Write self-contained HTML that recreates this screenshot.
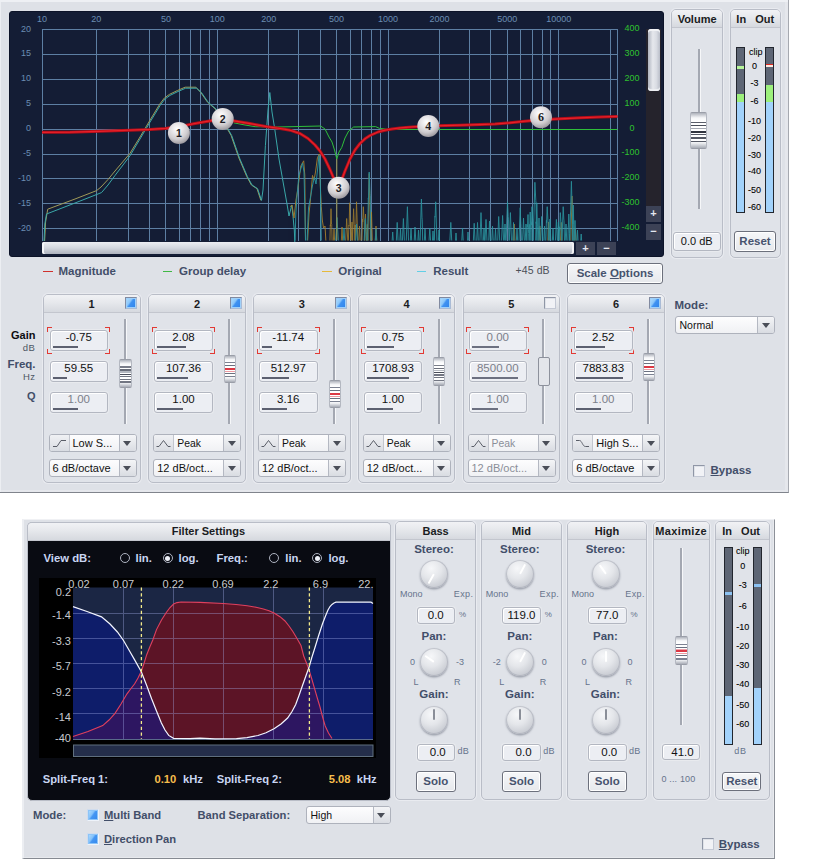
<!DOCTYPE html><html><head><meta charset="utf-8"><title>EQ</title><style>
*{box-sizing:border-box}
html,body{margin:0;padding:0;background:#fff}
body{width:818px;height:864px;overflow:hidden;position:relative;font-family:"Liberation Sans",Arial,sans-serif;font-size:11px;color:#000}
.abs{position:absolute}
.main{position:absolute;background:#dee1e7;}
.grp{position:absolute;border:1px solid #b9bdc7;border-radius:5px;background:#e0e3e9;box-shadow:0 0 0 1px #e9ebf0}
.grp .hd{position:absolute;left:0;right:0;top:0;border-radius:4px 4px 0 0;background:linear-gradient(#f1f2f5,#e6e8ec 45%,#d6d9df);border-bottom:1px solid #c3c6ce;text-align:center;font-weight:bold;font-size:11px;color:#1a1c22}
.t{position:absolute;white-space:nowrap;line-height:1}
.b{font-weight:bold}
.lbl{color:#424e69;font-weight:bold}
.inp{position:absolute;background:#eceef3;border:1px solid #b3b7c1;border-radius:3px;box-shadow:inset 1px 1px 0 #fff, 0 0 0 1px #e8eaee;text-align:center;font-size:11px;color:#111}
.inp.dis{color:#7c808a}
.bar{position:absolute;height:2px;background:#5c6070}
.btn{position:absolute;border:1px solid #6c707c;border-radius:3px;background:linear-gradient(#f6f7f9,#e6e8ec);box-shadow:inset 0 0 0 1px #fff;text-align:center;font-weight:bold;color:#47536e;font-size:11.5px}
.combo{position:absolute;border:1px solid #aeb2bc;border-radius:3px;background:linear-gradient(#fdfdfe,#f0f1f4);font-size:11px;color:#111;overflow:hidden}
.combo .ar{position:absolute;right:0;top:0;bottom:0;width:17px;border-left:1px solid #b4b8c2;background:linear-gradient(#f4f5f7,#d9dce2)}
.combo .ar:after{content:"";position:absolute;left:3.5px;top:6px;border:4.5px solid transparent;border-top:5px solid #4a4e58;border-bottom:0}
.combo .ic{position:absolute;left:0;top:0;bottom:0;width:20px;border-right:1px solid #c3c6ce;background:linear-gradient(#f0f1f4,#d9dce2)}
.combo.dis{color:#8a8e98}
.chk{position:absolute;width:12px;height:12px;border:1px solid;border-color:#8f96a6 #c3c8d4 #c3c8d4 #8f96a6;background:#f1f2f6;box-shadow:inset 1px 1px 0 #dfe2e8}
.chk.on{border-color:#818aa0 #a9bbd6 #a9bbd6 #818aa0;background:linear-gradient(125deg,#b4defd 0%,#8ac6fa 38%,#3f92f2 50%,#2f82ea 100%);box-shadow:inset 0 0 0 1px #9fd0f9}
.chk.lt{border-color:#cfdcee #eef3fa #eef3fa #cfdcee;background:linear-gradient(125deg,#b4defd 0%,#84c2fa 40%,#4496f3 52%,#3487ec 100%);box-shadow:inset 0 0 0 1px #8cc4f8}
.trk{position:absolute;width:2px;background:#a4a8b2;box-shadow:1px 0 0 #f6f7f9}
.thumb{position:absolute;border-radius:2px;border:1px solid #b4b8c1;border-top-color:#9a9ea8;border-bottom-color:#9a9ea8;background:linear-gradient(#aeb2bb,#f6f7f9 14%,#ffffff 24%,#ffffff 78%,#eceef1 86%,#a8acb6);overflow:hidden}
.thumb i{position:absolute;left:0;right:0;height:1px;background:#6a6e7a}
.thumb i.r{background:#e0303a;height:2px}
.knob{position:absolute;width:28px;height:28px;border-radius:50%;background:radial-gradient(circle at 40% 30%,#f6f7f9 0%,#e4e6ea 40%,#c9ccd3 75%,#b4b7c0 100%);box-shadow:0 1.5px 2px rgba(110,115,130,.6),inset 0 0 0 1px rgba(150,155,168,.45)}
.knob i{position:absolute;left:13px;top:3px;width:2px;height:11px;background:#fff;transform-origin:1px 11px;border-radius:1px}
.knob i.d{background:#8a8e98}
.sm{font-size:9px;color:#66738c}
</style></head><body>
<div class="main" style="left:0;top:0;width:789px;height:493px;border-bottom:1px solid #80848c;border-right:1px solid #a6a9b0;box-shadow:inset 1px 0 0 #eceef2,inset -3px 0 0 #e5e7ec,inset 0 -2px 0 #e5e7ec"></div>
<div class="abs" style="left:0;top:0;width:788px;height:2px;background:#eef0f4"></div>
<div class="abs" style="left:9px;top:10.5px;width:654.8px;height:246.5px;background:#141d35;border-radius:3px;border:1px solid #0c1328"></div>
<svg class="abs" style="left:0;top:0" width="670" height="260" viewBox="0 0 670 260" font-family="Liberation Sans, Arial, sans-serif"><path d="M42.5 29V240.5M96.5 29V240.5M128.5 29V240.5M149.5 29V240.5M165.5 29V240.5M179.5 29V240.5M190.5 29V240.5M200.5 29V240.5M209.5 29V240.5M217.5 29V240.5M268.5 29V240.5M298.5 29V240.5M320.5 29V240.5M336.5 29V240.5M350.5 29V240.5M361.5 29V240.5M371.5 29V240.5M380.5 29V240.5M388.5 29V240.5M439.5 29V240.5M469.5 29V240.5M490.5 29V240.5M507.5 29V240.5M520.5 29V240.5M532.5 29V240.5M542.5 29V240.5M550.5 29V240.5M558.5 29V240.5M610.5 29V240.5M617.5 29V240.5M42 29.5H618.0M42 54.5H618.0M42 79.5H618.0M42 104.5H618.0M42 129.5H618.0M42 154.5H618.0M42 178.5H618.0M42 203.5H618.0M42 228.5H618.0" stroke="#5d7fa3" stroke-width="1" fill="none" shape-rendering="crispEdges"/><text x="42.0" y="21.9" font-size="9" fill="#6b8db3" text-anchor="middle">10</text><text x="96.3" y="21.9" font-size="9" fill="#6b8db3" text-anchor="middle">20</text><text x="165.9" y="21.9" font-size="9" fill="#6b8db3" text-anchor="middle">50</text><text x="217.3" y="21.9" font-size="9" fill="#6b8db3" text-anchor="middle">100</text><text x="268.7" y="21.9" font-size="9" fill="#6b8db3" text-anchor="middle">200</text><text x="336.6" y="21.9" font-size="9" fill="#6b8db3" text-anchor="middle">500</text><text x="388.0" y="21.9" font-size="9" fill="#6b8db3" text-anchor="middle">1000</text><text x="439.4" y="21.9" font-size="9" fill="#6b8db3" text-anchor="middle">2000</text><text x="507.3" y="21.9" font-size="9" fill="#6b8db3" text-anchor="middle">5000</text><text x="558.7" y="21.9" font-size="9" fill="#6b8db3" text-anchor="middle">10000</text><text x="31" y="31.5" font-size="9" fill="#6b8db3" text-anchor="end">20</text><text x="31" y="56.4" font-size="9" fill="#6b8db3" text-anchor="end">15</text><text x="31" y="81.3" font-size="9" fill="#6b8db3" text-anchor="end">10</text><text x="31" y="106.2" font-size="9" fill="#6b8db3" text-anchor="end">5</text><text x="31" y="131.1" font-size="9" fill="#6b8db3" text-anchor="end">0</text><text x="31" y="156.0" font-size="9" fill="#6b8db3" text-anchor="end">-5</text><text x="31" y="180.9" font-size="9" fill="#6b8db3" text-anchor="end">-10</text><text x="31" y="205.8" font-size="9" fill="#6b8db3" text-anchor="end">-15</text><text x="31" y="230.7" font-size="9" fill="#6b8db3" text-anchor="end">-20</text><text x="639.5" y="30.9" font-size="9" fill="#2fc22f" text-anchor="end">400</text><text x="639.5" y="55.8" font-size="9" fill="#2fc22f" text-anchor="end">300</text><text x="639.5" y="80.7" font-size="9" fill="#2fc22f" text-anchor="end">200</text><text x="639.5" y="105.6" font-size="9" fill="#2fc22f" text-anchor="end">100</text><text x="634.5" y="130.5" font-size="9" fill="#2fc22f" text-anchor="end">0</text><text x="639.5" y="155.4" font-size="9" fill="#2fc22f" text-anchor="end">-100</text><text x="639.5" y="180.3" font-size="9" fill="#2fc22f" text-anchor="end">-200</text><text x="639.5" y="205.2" font-size="9" fill="#2fc22f" text-anchor="end">-300</text><text x="639.5" y="230.1" font-size="9" fill="#2fc22f" text-anchor="end">-400</text><polyline points="44.6,241.0 45.6,222.0 47.7,209.2 75.0,199.0 96.6,190.6 101.0,187.0 108.0,179.5 115.0,171.0 130.0,153.3 139.4,138.0 149.0,121.8 159.7,104.2 164.4,98.0 169.4,94.4 177.4,90.5 185.1,87.2 195.9,87.2 200.8,92.5 207.6,102.3 215.4,109.0 223.4,122.0 231.1,135.5 238.9,158.0 246.8,176.6 251.4,185.0 257.0,188.7 260.9,200.4" fill="none" stroke="#a09a58" stroke-width="1"/><polyline points="44.0,241.0 44.8,224.0 46.5,214.0 75.0,203.0 101.5,192.6 108.0,185.0 115.0,175.5 130.0,155.8 140.0,139.0 149.6,122.8 160.3,105.2 165.0,99.0 170.0,95.4 178.0,91.5 185.7,88.2 196.5,88.2 201.4,92.5 208.2,102.3 216.0,109.0 224.0,122.0 231.7,135.5 239.5,158.0 247.4,176.6 252.0,185.0 257.6,188.7 261.5,200.4 263.0,190.0 265.4,145.6 268.0,110.0 269.8,92.5 272.0,112.0 274.7,128.7 279.0,159.0 284.5,190.0 287.0,204.0 289.0,216.0 291.8,205.0 293.0,216.5 294.3,230.0 295.0,246.0" fill="none" stroke="#3aa7a8" stroke-width="1"/><clipPath id="cl"><rect x="42" y="29" width="576" height="211.5"/></clipPath><g clip-path="url(#cl)" fill="none" stroke-width="1" opacity="0.9"><polyline points="290.0,206.7 292.0,205.0 294.0,218.0 296.0,200.0 297.8,189.0 299.5,176.0 300.8,166.0 303.7,160.8 304.8,175.0 305.5,243.0 307.5,243.0 309.0,214.0 310.5,199.0 312.5,175.4 314.0,180.0 315.5,172.0 317.4,157.8 319.3,154.0 320.3,185.0 321.3,206.7 322.3,220.0 323.5,228.0 325.0,226.0 326.0,243.0" stroke="#a8832e"/><polyline points="295.0,243.0 295.8,215.0 296.8,199.0 298.8,176.0 300.5,170.0 302.5,163.0 304.0,172.0 305.6,243.0 307.0,243.0 308.5,208.0 310.5,197.0 312.4,186.0 314.4,177.4 316.0,184.0 317.5,170.0 319.0,155.5 320.3,180.0 321.3,243.0" stroke="#2c9aa3"/></g><g opacity="0.88"><polyline clip-path="url(#cl)" points="329.8,246.0 330.3,224.8 330.5,226.2 331.0,208.7 331.5,224.0 331.7,224.3 332.2,246.0 333.1,246.0 334.0,229.0 334.9,246.0 341.1,246.0 342.0,227.0 342.9,246.0 345.4,246.0 346.7,218.5 348.0,246.0 348.2,246.0 348.9,225.2 349.1,226.2 349.7,202.8 350.4,225.1 350.6,227.4 351.2,246.0 351.0,246.0 352.0,222.0 353.0,246.0 352.3,246.0 353.6,208.7 354.2,224.1 354.4,224.8 354.9,246.0 355.0,246.0 355.7,225.1 355.9,227.2 356.5,201.8 358.0,246.0 358.5,246.0 359.5,226.0 360.5,246.0 361.8,246.0 362.5,219.0 362.7,222.0 363.3,206.7 364.0,219.7 364.2,219.9 364.8,246.0 364.5,246.0 365.5,214.0 365.9,227.4 366.1,231.8 366.5,246.0 366.3,246.0 367.3,224.3 368.3,246.0 367.7,246.0 369.2,173.5 370.7,246.0 370.5,246.0 370.9,228.5 371.1,230.3 371.5,212.0 372.5,246.0 374.9,246.0 376.0,226.0 377.1,246.0 513.3,246.0 514.3,224.0 515.3,246.0 538.8,246.0 539.8,226.0 540.8,246.0 547.6,246.0 548.6,222.0 549.6,246.0 560.3,246.0 561.3,222.4 562.3,246.0 570.7,246.0 572.0,196.0 572.6,211.0 572.8,212.1 573.3,246.0 574.6,246.0 575.5,228.0 576.4,246.0" fill="none" stroke="#a8832e" stroke-width="0.9" stroke-linejoin="miter"/><polyline clip-path="url(#cl)" points="335.4,246.0 337.0,217.5 338.6,246.0 343.0,246.0 344.0,228.0 345.0,246.0 355.3,246.0 356.5,224.0 357.7,246.0 363.9,246.0 365.3,218.5 366.7,246.0 367.5,246.0 368.3,197.9 368.5,199.5 369.2,172.0 370.0,193.8 370.2,195.8 370.9,246.0 375.0,246.0 376.0,229.0 377.0,246.0 391.8,246.0 392.7,232.0 393.6,246.0 396.1,246.0 397.2,222.4 398.3,246.0 399.6,246.0 400.5,229.0 401.4,246.0 402.2,246.0 403.4,218.5 404.6,246.0 406.1,246.0 407.4,206.7 408.7,246.0 410.0,246.0 411.0,228.0 412.0,246.0 413.9,246.0 415.0,227.0 416.1,246.0 417.6,246.0 418.5,230.0 419.4,246.0 420.0,246.0 421.4,199.0 422.0,217.9 422.2,219.3 422.8,246.0 424.0,246.0 425.0,229.0 426.0,246.0 428.7,246.0 429.8,228.0 430.9,246.0 432.1,246.0 433.0,231.0 433.9,246.0 434.3,246.0 434.9,216.4 435.1,217.2 435.7,201.8 437.1,246.0 438.1,246.0 439.0,230.0 439.9,246.0 449.6,246.0 450.8,222.4 452.0,246.0 455.2,246.0 456.0,233.0 456.8,246.0 461.5,246.0 462.5,228.0 463.5,246.0 467.2,246.0 468.0,232.0 468.8,246.0 473.1,246.0 474.2,223.3 475.3,246.0 476.5,246.0 477.5,222.5 478.5,246.0 479.7,246.0 481.0,212.6 482.3,246.0 483.1,246.0 484.0,228.0 484.9,246.0 484.8,246.0 486.0,219.4 487.2,246.0 488.5,246.0 489.5,221.0 490.5,246.0 491.5,246.0 492.5,226.0 493.5,246.0 494.6,246.0 495.5,229.0 496.4,246.0 497.5,246.0 498.7,216.5 499.9,246.0 501.4,246.0 502.6,215.5 503.8,246.0 504.1,246.0 505.0,224.0 505.9,246.0 505.9,246.0 507.5,201.8 508.2,216.8 508.5,219.9 509.1,246.0 509.1,246.0 510.4,212.6 511.7,246.0 512.5,246.0 513.5,222.5 514.5,246.0 516.1,246.0 517.0,228.0 517.9,246.0 518.8,246.0 520.2,207.7 520.8,223.3 521.0,226.6 521.6,246.0 522.4,246.0 523.5,218.0 524.6,246.0 525.0,246.0 526.0,224.0 527.0,246.0 526.8,246.0 527.3,224.8 527.5,226.7 528.0,214.5 528.5,229.3 528.7,233.6 529.2,246.0 529.2,246.0 529.7,224.3 529.8,228.0 530.2,212.0 530.7,227.8 530.8,232.1 531.2,246.0 530.7,246.0 531.3,222.5 531.5,224.9 532.0,206.7 532.6,218.3 532.8,219.8 533.3,246.0 533.0,246.0 534.9,182.3 535.8,200.4 536.0,203.5 536.8,246.0 535.5,246.0 536.1,221.8 536.3,223.7 536.8,202.8 537.4,225.1 537.6,226.1 538.1,246.0 538.0,246.0 539.0,218.0 540.0,246.0 540.5,246.0 541.7,216.5 542.9,246.0 543.6,246.0 544.5,226.0 545.4,246.0 545.7,246.0 546.4,220.4 546.6,222.9 547.2,206.7 547.9,220.2 548.1,224.0 548.7,246.0 549.0,246.0 550.0,219.0 551.0,246.0 552.1,246.0 553.0,228.0 553.9,246.0 555.2,246.0 556.4,219.4 557.6,246.0 557.5,246.0 558.4,222.0 559.3,246.0 559.0,246.0 559.6,226.8 559.8,230.4 560.3,212.6 560.9,221.3 561.1,222.5 561.6,246.0 561.8,246.0 563.2,206.7 563.8,219.1 564.0,220.7 564.6,246.0 565.0,246.0 566.0,224.0 567.0,246.0 567.8,246.0 568.2,226.7 568.4,226.9 568.8,214.0 569.2,228.8 569.4,233.6 569.8,246.0 569.6,246.0 571.4,181.3 573.2,246.0 572.3,246.0 572.8,220.3 572.9,224.1 573.3,205.0 574.3,246.0 573.9,246.0 575.0,220.4 576.1,246.0 576.7,246.0 577.5,230.0 578.3,246.0 580.4,246.0 581.2,234.0 582.0,246.0" fill="none" stroke="#2c9aa3" stroke-width="0.95" stroke-linejoin="miter"/></g><path d="M336.8 240V159" stroke="#9a8f44" stroke-width="1" fill="none"/><polyline points="233.7,122.8 245.0,125.0 255.2,126.7 277.8,127.0 320.6,126.0 325.0,129.0 329.0,137.0 332.0,142.0 334.5,150.0 336.8,159.0 339.0,152.0 341.7,147.6 345.0,138.0 348.7,131.0 353.6,127.0 375.6,126.6 379.5,128.4 389.0,129.5 617.5,129.5" fill="none" stroke="#2fbf3a" stroke-width="1"/><polyline points="42.0,132.3 70.0,132.2 100.0,131.3 130.0,130.2 150.0,129.4 165.2,128.4 178.9,126.6 195.0,123.5 208.2,121.2 216.0,120.0 222.9,119.5 230.0,120.3 235.6,121.2 250.0,123.6 267.0,126.7 280.0,128.5 290.0,130.2 300.0,133.5 308.0,138.5 315.0,145.0 320.0,151.0 325.0,159.0 330.0,169.5 334.0,179.0 337.0,185.5 338.3,187.5 339.6,185.5 342.0,179.0 345.0,171.0 350.0,159.0 355.0,150.0 360.0,143.5 365.0,138.8 370.0,135.5 378.0,132.0 385.0,130.2 392.0,129.0 400.0,127.9 409.0,127.2 420.0,126.4 428.5,126.0 445.0,125.6 460.0,125.2 480.0,124.6 495.0,124.0 510.0,122.8 525.0,121.2 541.0,119.8 560.0,118.8 580.0,117.8 600.0,117.0 617.5,116.4" fill="none" stroke="#b40e18" stroke-width="3" stroke-linejoin="round" stroke-linecap="butt"/><polyline points="42.0,132.3 70.0,132.2 100.0,131.3 130.0,130.2 150.0,129.4 165.2,128.4 178.9,126.6 195.0,123.5 208.2,121.2 216.0,120.0 222.9,119.5 230.0,120.3 235.6,121.2 250.0,123.6 267.0,126.7 280.0,128.5 290.0,130.2 300.0,133.5 308.0,138.5 315.0,145.0 320.0,151.0 325.0,159.0 330.0,169.5 334.0,179.0 337.0,185.5 338.3,187.5 339.6,185.5 342.0,179.0 345.0,171.0 350.0,159.0 355.0,150.0 360.0,143.5 365.0,138.8 370.0,135.5 378.0,132.0 385.0,130.2 392.0,129.0 400.0,127.9 409.0,127.2 420.0,126.4 428.5,126.0 445.0,125.6 460.0,125.2 480.0,124.6 495.0,124.0 510.0,122.8 525.0,121.2 541.0,119.8 560.0,118.8 580.0,117.8 600.0,117.0 617.5,116.4" fill="none" stroke="#e8202a" stroke-width="1.2" stroke-linejoin="round"/><defs><radialGradient id="bg" cx="0.42" cy="0.32" r="0.75"><stop offset="0" stop-color="#ffffff"/><stop offset="0.28" stop-color="#ebe9eb"/><stop offset="0.62" stop-color="#d0cdd0"/><stop offset="1" stop-color="#908c92"/></radialGradient></defs><circle cx="178.9" cy="133" r="11" fill="url(#bg)"/><text x="178.9" y="137" font-size="10.5" font-weight="bold" fill="#1c1c24" text-anchor="middle">1</text><circle cx="222.7" cy="118.9" r="11" fill="url(#bg)"/><text x="222.7" y="122.9" font-size="10.5" font-weight="bold" fill="#1c1c24" text-anchor="middle">2</text><circle cx="338.6" cy="187.7" r="11" fill="url(#bg)"/><text x="338.6" y="191.7" font-size="10.5" font-weight="bold" fill="#1c1c24" text-anchor="middle">3</text><circle cx="428.3" cy="126" r="11" fill="url(#bg)"/><text x="428.3" y="130" font-family="Liberation Serif, serif" font-size="12" font-weight="bold" fill="#1c1c24" text-anchor="middle">4</text><circle cx="541" cy="117.3" r="11" fill="url(#bg)"/><text x="541" y="121.3" font-family="Liberation Serif, serif" font-size="12" font-weight="bold" fill="#1c1c24" text-anchor="middle">6</text></svg>
<div class="abs" style="left:646px;top:29px;width:15px;height:178px;background:#25232c"></div>
<div class="abs" style="left:648px;top:29px;width:12px;height:62px;border-radius:3px;background:linear-gradient(90deg,#aeb3be,#e6e8ed 40%,#d9dce3 70%,#b9bdc8);box-shadow:inset 0 2px 0 #f2f3f6,inset 0 -2px 0 #eceef2"></div>
<div class="abs" style="left:646px;top:206px;width:15px;height:16px;background:#3c4256;color:#e4e8f0;font-weight:bold;font-size:11px;line-height:15px;text-align:center">+</div>
<div class="abs" style="left:646px;top:224px;width:15px;height:16px;background:#3c4256;color:#e4e8f0;font-weight:bold;font-size:11px;line-height:15px;text-align:center">−</div>
<div class="abs" style="left:576px;top:242px;width:19px;height:13px;background:#3c4256;color:#e4e8f0;font-weight:bold;font-size:11px;line-height:12px;text-align:center">+</div>
<div class="abs" style="left:597px;top:242px;width:19px;height:13px;background:#3c4256;color:#e4e8f0;font-weight:bold;font-size:11px;line-height:12px;text-align:center">−</div>
<div class="abs" style="left:42px;top:242px;width:532px;height:12px;border-radius:2px;background:linear-gradient(#eceef2,#d3d7de 50%,#aeb3be);box-shadow:inset 2px 0 0 #f6f7f9,inset -2px 0 0 #f0f1f4"></div>
<div class="abs" style="left:43px;top:270.5px;width:9.5px;height:1.5px;background:#d0302c"></div>
<div class="t lbl" style="font-size:11.5px;left:58.5px;top:265.9px;">Magnitude</div>
<div class="abs" style="left:163.3px;top:270.5px;width:9.199999999999989px;height:1.5px;background:#3fb845"></div>
<div class="t lbl" style="font-size:11.5px;left:179px;top:265.9px;">Group delay</div>
<div class="abs" style="left:322px;top:270.5px;width:9.5px;height:1.5px;background:#e6b93a"></div>
<div class="t lbl" style="font-size:11.5px;left:338.3px;top:265.9px;">Original</div>
<div class="abs" style="left:416.7px;top:270.5px;width:9.800000000000011px;height:1.5px;background:#62cfe6"></div>
<div class="t lbl" style="font-size:11.5px;left:433.2px;top:265.9px;">Result</div>
<div class="t " style="font-size:10.5px;left:515.5px;top:264.8px;color:#4c5058;letter-spacing:.1px">+45 dB</div>
<div class="btn" style="left:567px;top:263px;width:96px;height:21px;line-height:19px">Scale <u>O</u>ptions</div>
<div class="grp" style="left:671.2px;top:8.6px;width:51.8px;height:249px"><div class="hd" style="height:18px;line-height:17px;line-height:18px;">Volume</div></div>
<div class="trk" style="left:697.5px;top:49px;height:160px"></div>
<div class="thumb" style="left:690px;top:112px;width:16.5px;height:37px"><i style="top:8.5px;height:1.2px;background:#5a5e6a"></i><i style="top:12.2px;height:1.3px;background:#4a4e5a"></i><i style="top:15.0px;height:1.2px;background:#a4a8b2"></i><i style="top:18.1px;height:1.8px;background:#30343f"></i><i style="top:21.1px;height:1.2px;background:#555965"></i><i style="top:24.3px;height:1.3px;background:#555965"></i><i style="top:27.9px;height:1.3px;background:#555965"></i></div>
<div class="inp" style="left:673px;top:231.5px;width:47.5px;height:19.5px;line-height:17px">0.0 dB</div>
<div class="grp" style="left:729.5px;top:8.6px;width:51.6px;height:249px"><div class="hd" style="height:18px;line-height:17px;line-height:18px;">In&nbsp;&nbsp;&nbsp;Out</div></div>
<div class="abs" style="left:736px;top:47px;width:9px;height:166px;background:#5e6675;border:1px solid #22262e"></div>
<div class="abs" style="left:737px;top:65.5px;width:7px;height:3.5px;background:#b7f59a"></div>
<div class="abs" style="left:737px;top:93.7px;width:7px;height:8.700000000000003px;background:#9df07c"></div>
<div class="abs" style="left:737px;top:102.4px;width:7px;height:109.6px;background:#a2d2fb"></div>
<div class="abs" style="left:765px;top:47px;width:9px;height:166px;background:#5e6675;border:1px solid #22262e"></div>
<div class="abs" style="left:766px;top:63.8px;width:7px;height:1.5px;background:#e0281e"></div>
<div class="abs" style="left:766px;top:65.3px;width:7px;height:1.5px;background:#ffe9e0"></div>
<div class="abs" style="left:766px;top:85px;width:7px;height:17.400000000000006px;background:#9df07c"></div>
<div class="abs" style="left:766px;top:102.4px;width:7px;height:109.6px;background:#a2d2fb"></div>
<div class="t " style="font-size:9px;left:655.7px;width:200px;text-align:center;top:48.4px;color:#000;-webkit-text-stroke:.08px #000">clip</div>
<div class="t " style="font-size:9px;left:654.6px;width:200px;text-align:center;top:61.5px;color:#000;-webkit-text-stroke:.08px #000">0</div>
<div class="t " style="font-size:9px;left:654.6px;width:200px;text-align:center;top:78.8px;color:#000;-webkit-text-stroke:.08px #000">-3</div>
<div class="t " style="font-size:9px;left:654.6px;width:200px;text-align:center;top:97.2px;color:#000;-webkit-text-stroke:.08px #000">-6</div>
<div class="t " style="font-size:9px;left:654.6px;width:200px;text-align:center;top:116.5px;color:#000;-webkit-text-stroke:.08px #000">-10</div>
<div class="t " style="font-size:9px;left:654.6px;width:200px;text-align:center;top:133.5px;color:#000;-webkit-text-stroke:.08px #000">-20</div>
<div class="t " style="font-size:9px;left:654.6px;width:200px;text-align:center;top:150.5px;color:#000;-webkit-text-stroke:.08px #000">-30</div>
<div class="t " style="font-size:9px;left:654.6px;width:200px;text-align:center;top:167.3px;color:#000;-webkit-text-stroke:.08px #000">-40</div>
<div class="t " style="font-size:9px;left:654.6px;width:200px;text-align:center;top:186.3px;color:#000;-webkit-text-stroke:.08px #000">-50</div>
<div class="t " style="font-size:9px;left:654.6px;width:200px;text-align:center;top:202.8px;color:#000;-webkit-text-stroke:.08px #000">-60</div>
<div class="btn" style="left:734px;top:230.5px;width:42px;height:21px;line-height:18px">Reset</div>
<div class="t b" style="font-size:11px;right:782.5px;top:329.8px;color:#0c0c10">Gain</div>
<div class="t " style="font-size:9.5px;right:782.5px;top:342.6px;color:#4c5563;letter-spacing:.6px">dB</div>
<div class="t lbl" style="font-size:11.5px;right:782.5px;top:359.1px;">Freq.</div>
<div class="t " style="font-size:9.5px;right:782.5px;top:372.1px;color:#4c5563;letter-spacing:.4px">Hz</div>
<div class="t lbl" style="font-size:11px;right:782.5px;top:391.2px;">Q</div>
<div class="grp" style="left:42.5px;top:294px;width:98px;height:188.5px"><div class="hd" style="height:17.5px;line-height:16.5px;line-height:18.5px;">1</div></div>
<div class="chk on" style="left:125.0px;top:297px"></div>
<svg class="abs" style="left:47.0px;top:327px" width="63.0" height="26.5"><path d="M0.5 5V0.5H5M58.0 0.5H62.5V5M0.5 21.5V26.0H5M58.0 26.0H62.5V21.5" stroke="#e23a34" stroke-width="1" fill="none" shape-rendering="crispEdges"/></svg>
<div class="inp" style="left:49.5px;top:329.5px;width:58.5px;height:21px;line-height:13px;font-size:11.5px">-0.75</div>
<div class="bar" style="left:52.5px;top:346.0px;width:25px;background:#5c6070"></div>
<div class="inp" style="left:49.5px;top:360.5px;width:58.5px;height:21px;line-height:13px;font-size:11.5px">59.55</div>
<div class="bar" style="left:52.5px;top:377.0px;width:14.5px;background:#5c6070"></div>
<div class="inp dis" style="left:49.5px;top:391.5px;width:58.5px;height:21px;line-height:13px;font-size:11.5px">1.00</div>
<div class="bar" style="left:52.5px;top:408.0px;width:25px;background:#5c6070"></div>
<div class="trk" style="left:123.7px;top:319px;height:105px"></div>
<div class="thumb" style="left:119.0px;top:359px;width:12.5px;height:28.5px"><i style="top:6.4px;height:1.2px;background:#7a7e8a"></i><i style="top:9.3px;height:1.3px;background:#6a6e7a"></i><i style="top:11.4px;height:1.2px;background:#b4b8c0"></i><i style="top:13.8px;height:1.3px;background:#4a4e5a"></i><i style="top:16.1px;height:1.2px;background:#727682"></i><i style="top:18.6px;height:1.3px;background:#727682"></i><i style="top:21.4px;height:1.3px;background:#727682"></i></div>
<div class="combo" style="left:48.5px;top:434.3px;width:88px;height:17.7px;line-height:17.6px;"><div class="ic"><svg width="20" height="15" style="position:absolute;left:0;top:0"><g fill="none" stroke="#5a5e68" stroke-width="1"><path d="M3 11.5H7L11 5.5H16" /></g></svg></div><span style="position:absolute;left:23px;top:0">Low S...</span><div class="ar"></div></div>
<div class="combo" style="left:48.5px;top:458.8px;width:88px;height:18px;line-height:16.4px"><span style="position:absolute;left:3px;top:0">6 dB/octave</span><div class="ar"></div></div>
<div class="grp" style="left:148.25px;top:294px;width:97.5px;height:188.5px"><div class="hd" style="height:17.5px;line-height:16.5px;line-height:18.5px;">2</div></div>
<div class="chk on" style="left:229.75px;top:297px"></div>
<svg class="abs" style="left:151.75px;top:327px" width="63.0" height="26.5"><path d="M0.5 5V0.5H5M58.0 0.5H62.5V5M0.5 21.5V26.0H5M58.0 26.0H62.5V21.5" stroke="#e23a34" stroke-width="1" fill="none" shape-rendering="crispEdges"/></svg>
<div class="inp" style="left:154.25px;top:329.5px;width:58.5px;height:21px;line-height:13px;font-size:11.5px">2.08</div>
<div class="bar" style="left:157.25px;top:346.0px;width:28.5px;background:#5c6070"></div>
<div class="inp" style="left:154.25px;top:360.5px;width:58.5px;height:21px;line-height:13px;font-size:11.5px">107.36</div>
<div class="bar" style="left:157.25px;top:377.0px;width:30.5px;background:#5c6070"></div>
<div class="inp" style="left:154.25px;top:391.5px;width:58.5px;height:21px;line-height:13px;font-size:11.5px">1.00</div>
<div class="bar" style="left:157.25px;top:408.0px;width:26px;background:#5c6070"></div>
<div class="trk" style="left:228.45px;top:319px;height:105px"></div>
<div class="thumb" style="left:223.75px;top:354.5px;width:12.5px;height:28.5px"><i style="top:6.4px;height:1.2px;background:#7c8292"></i><i style="top:9.1px;height:1.3px;background:#6a7080"></i><i style="top:12.0px;height:1.0px;background:#eea0a8"></i><i style="top:12.9px;height:1.9px;background:#dc3844"></i><i style="top:15.1px;height:1.1px;background:#ee9aa2"></i><i style="top:17.6px;height:1.3px;background:#6a7080"></i><i style="top:20.6px;height:1.3px;background:#7c8292"></i></div>
<div class="combo" style="left:153.25px;top:434.3px;width:88px;height:17.7px;line-height:17.6px;font-size:10.4px;"><div class="ic"><svg width="20" height="15" style="position:absolute;left:0;top:0"><g fill="none" stroke="#5a5e68" stroke-width="1"><path d="M2.5 11.5H5L9.5 5.5L14 11.5H16.5" /></g></svg></div><span style="position:absolute;left:23px;top:0">Peak</span><div class="ar"></div></div>
<div class="combo" style="left:153.25px;top:458.8px;width:88px;height:18px;line-height:16.4px"><span style="position:absolute;left:3px;top:0">12 dB/oct...</span><div class="ar"></div></div>
<div class="grp" style="left:253px;top:294px;width:97.5px;height:188.5px"><div class="hd" style="height:17.5px;line-height:16.5px;line-height:18.5px;">3</div></div>
<div class="chk on" style="left:334.5px;top:297px"></div>
<svg class="abs" style="left:256.5px;top:327px" width="63.0" height="26.5"><path d="M0.5 5V0.5H5M58.0 0.5H62.5V5M0.5 21.5V26.0H5M58.0 26.0H62.5V21.5" stroke="#e23a34" stroke-width="1" fill="none" shape-rendering="crispEdges"/></svg>
<div class="inp" style="left:259px;top:329.5px;width:58.5px;height:21px;line-height:13px;font-size:11.5px">-11.74</div>
<div class="bar" style="left:262px;top:346.0px;width:10px;background:#5c6070"></div>
<div class="inp" style="left:259px;top:360.5px;width:58.5px;height:21px;line-height:13px;font-size:11.5px">512.97</div>
<div class="bar" style="left:262px;top:377.0px;width:26.5px;background:#5c6070"></div>
<div class="inp" style="left:259px;top:391.5px;width:58.5px;height:21px;line-height:13px;font-size:11.5px">3.16</div>
<div class="bar" style="left:262px;top:408.0px;width:25px;background:#5c6070"></div>
<div class="trk" style="left:333.2px;top:319px;height:105px"></div>
<div class="thumb" style="left:328.5px;top:379.5px;width:12.5px;height:28.5px"><i style="top:6.4px;height:1.2px;background:#7c8292"></i><i style="top:9.1px;height:1.3px;background:#6a7080"></i><i style="top:12.0px;height:1.0px;background:#eea0a8"></i><i style="top:12.9px;height:1.9px;background:#dc3844"></i><i style="top:15.1px;height:1.1px;background:#ee9aa2"></i><i style="top:17.6px;height:1.3px;background:#6a7080"></i><i style="top:20.6px;height:1.3px;background:#7c8292"></i></div>
<div class="combo" style="left:258px;top:434.3px;width:88px;height:17.7px;line-height:17.6px;font-size:10.4px;"><div class="ic"><svg width="20" height="15" style="position:absolute;left:0;top:0"><g fill="none" stroke="#5a5e68" stroke-width="1"><path d="M2.5 11.5H5L9.5 5.5L14 11.5H16.5" /></g></svg></div><span style="position:absolute;left:23px;top:0">Peak</span><div class="ar"></div></div>
<div class="combo" style="left:258px;top:458.8px;width:88px;height:18px;line-height:16.4px"><span style="position:absolute;left:3px;top:0">12 dB/oct...</span><div class="ar"></div></div>
<div class="grp" style="left:357.75px;top:294px;width:97.5px;height:188.5px"><div class="hd" style="height:17.5px;line-height:16.5px;line-height:18.5px;">4</div></div>
<div class="chk on" style="left:439.25px;top:297px"></div>
<svg class="abs" style="left:361.25px;top:327px" width="63.0" height="26.5"><path d="M0.5 5V0.5H5M58.0 0.5H62.5V5M0.5 21.5V26.0H5M58.0 26.0H62.5V21.5" stroke="#e23a34" stroke-width="1" fill="none" shape-rendering="crispEdges"/></svg>
<div class="inp" style="left:363.75px;top:329.5px;width:58.5px;height:21px;line-height:13px;font-size:11.5px">0.75</div>
<div class="bar" style="left:366.75px;top:346.0px;width:27.5px;background:#5c6070"></div>
<div class="inp" style="left:363.75px;top:360.5px;width:58.5px;height:21px;line-height:13px;font-size:11.5px">1708.93</div>
<div class="bar" style="left:366.75px;top:377.0px;width:42px;background:#5c6070"></div>
<div class="inp" style="left:363.75px;top:391.5px;width:58.5px;height:21px;line-height:13px;font-size:11.5px">1.00</div>
<div class="bar" style="left:366.75px;top:408.0px;width:26px;background:#5c6070"></div>
<div class="trk" style="left:437.65px;top:319px;height:105px"></div>
<div class="thumb" style="left:432.95px;top:357.3px;width:12.5px;height:28.5px"><i style="top:6.4px;height:1.2px;background:#7a7e8a"></i><i style="top:9.3px;height:1.3px;background:#6a6e7a"></i><i style="top:11.4px;height:1.2px;background:#b4b8c0"></i><i style="top:13.8px;height:1.3px;background:#4a4e5a"></i><i style="top:16.1px;height:1.2px;background:#727682"></i><i style="top:18.6px;height:1.3px;background:#727682"></i><i style="top:21.4px;height:1.3px;background:#727682"></i></div>
<div class="combo" style="left:362.75px;top:434.3px;width:88px;height:17.7px;line-height:17.6px;font-size:10.4px;"><div class="ic"><svg width="20" height="15" style="position:absolute;left:0;top:0"><g fill="none" stroke="#5a5e68" stroke-width="1"><path d="M2.5 11.5H5L9.5 5.5L14 11.5H16.5" /></g></svg></div><span style="position:absolute;left:23px;top:0">Peak</span><div class="ar"></div></div>
<div class="combo" style="left:362.75px;top:458.8px;width:88px;height:18px;line-height:16.4px"><span style="position:absolute;left:3px;top:0">12 dB/oct...</span><div class="ar"></div></div>
<div class="grp" style="left:462.5px;top:294px;width:97.5px;height:188.5px"><div class="hd" style="height:17.5px;line-height:16.5px;line-height:18.5px;">5</div></div>
<div class="chk " style="left:544.0px;top:297px"></div>
<svg class="abs" style="left:466.0px;top:327px" width="63.0" height="26.5"><path d="M0.5 5V0.5H5M58.0 0.5H62.5V5M0.5 21.5V26.0H5M58.0 26.0H62.5V21.5" stroke="#e23a34" stroke-width="1" fill="none" shape-rendering="crispEdges"/></svg>
<div class="inp dis" style="left:468.5px;top:329.5px;width:58.5px;height:21px;line-height:13px;font-size:11.5px">0.00</div>
<div class="bar" style="left:471.5px;top:346.0px;width:27.5px;background:#6c7080"></div>
<div class="inp dis" style="left:468.5px;top:360.5px;width:58.5px;height:21px;line-height:13px;font-size:11.5px">8500.00</div>
<div class="bar" style="left:471.5px;top:377.0px;width:46px;background:#6c7080"></div>
<div class="inp dis" style="left:468.5px;top:391.5px;width:58.5px;height:21px;line-height:13px;font-size:11.5px">1.00</div>
<div class="bar" style="left:471.5px;top:408.0px;width:26.5px;background:#6c7080"></div>
<div class="trk" style="left:542.3000000000001px;top:319px;height:105px"></div>
<div class="abs" style="left:537.6px;top:357.3px;width:12.5px;height:28.5px;border:1px solid #8d919c;border-radius:2px;background:#e3e5ea"></div>
<div class="combo dis" style="left:467.5px;top:434.3px;width:88px;height:17.7px;line-height:17.6px;font-size:10.4px;"><div class="ic"><svg width="20" height="15" style="position:absolute;left:0;top:0"><g fill="none" stroke="#5a5e68" stroke-width="1"><path d="M2.5 11.5H5L9.5 5.5L14 11.5H16.5" /></g></svg></div><span style="position:absolute;left:23px;top:0">Peak</span><div class="ar"></div></div>
<div class="combo dis" style="left:467.5px;top:458.8px;width:88px;height:18px;line-height:16.4px"><span style="position:absolute;left:3px;top:0">12 dB/oct...</span><div class="ar"></div></div>
<div class="grp" style="left:567.25px;top:294px;width:97.5px;height:188.5px"><div class="hd" style="height:17.5px;line-height:16.5px;line-height:18.5px;">6</div></div>
<div class="chk on" style="left:648.75px;top:297px"></div>
<svg class="abs" style="left:570.75px;top:327px" width="63.0" height="26.5"><path d="M0.5 5V0.5H5M58.0 0.5H62.5V5M0.5 21.5V26.0H5M58.0 26.0H62.5V21.5" stroke="#e23a34" stroke-width="1" fill="none" shape-rendering="crispEdges"/></svg>
<div class="inp" style="left:574.05px;top:329.5px;width:58.5px;height:21px;line-height:13px;font-size:11.5px">2.52</div>
<div class="bar" style="left:576.25px;top:346.0px;width:28.5px;background:#5c6070"></div>
<div class="inp" style="left:574.05px;top:360.5px;width:58.5px;height:21px;line-height:13px;font-size:11.5px">7883.83</div>
<div class="bar" style="left:576.25px;top:377.0px;width:46.5px;background:#5c6070"></div>
<div class="inp dis" style="left:574.05px;top:391.5px;width:58.5px;height:21px;line-height:13px;font-size:11.5px">1.00</div>
<div class="bar" style="left:576.25px;top:408.0px;width:25px;background:#5c6070"></div>
<div class="trk" style="left:647.45px;top:319px;height:105px"></div>
<div class="thumb" style="left:642.75px;top:352.5px;width:12.5px;height:28.5px"><i style="top:6.4px;height:1.2px;background:#7c8292"></i><i style="top:9.1px;height:1.3px;background:#6a7080"></i><i style="top:12.0px;height:1.0px;background:#eea0a8"></i><i style="top:12.9px;height:1.9px;background:#dc3844"></i><i style="top:15.1px;height:1.1px;background:#ee9aa2"></i><i style="top:17.6px;height:1.3px;background:#6a7080"></i><i style="top:20.6px;height:1.3px;background:#7c8292"></i></div>
<div class="combo" style="left:572.25px;top:434.3px;width:88px;height:17.7px;line-height:17.6px;"><div class="ic"><svg width="20" height="15" style="position:absolute;left:0;top:0"><g fill="none" stroke="#5a5e68" stroke-width="1"><path d="M3 5.5H6.5C9 5.5 9.5 11.5 12.5 11.5H16" /></g></svg></div><span style="position:absolute;left:23px;top:0">High S...</span><div class="ar"></div></div>
<div class="combo" style="left:572.25px;top:458.8px;width:88px;height:18px;line-height:16.4px"><span style="position:absolute;left:3px;top:0">6 dB/octave</span><div class="ar"></div></div>
<div class="t lbl" style="font-size:11.5px;left:674.5px;top:300.4px;">Mode:</div>
<div class="combo" style="left:675px;top:315.7px;width:100px;height:18px;line-height:16.6px;font-size:10.5px"><span style="position:absolute;left:3.5px;top:0">Normal</span><div class="ar"></div></div>
<div class="chk" style="left:693px;top:465px"></div>
<div class="t lbl" style="font-size:11.5px;left:710.5px;top:464.6px;"><u>B</u>ypass</div>
<div class="main" style="left:22px;top:519px;width:753px;height:340px;border-bottom:1px solid #868a92;border-top:1px solid #f0f1f4;border-left:2px solid #eceef2;border-right:1px solid #8c9098;box-shadow:inset -1px 0 0 #e8eaee,inset 0 -1px 0 #e8eaee"></div>
<div class="abs" style="left:26.5px;top:522px;width:364px;height:278.5px;border-radius:5px;background:#090b12;border:1px solid #b9bdc7"></div>
<div class="grp" style="left:26.5px;top:522px;width:364px;height:18.5px;border-radius:5px 5px 0 0;border-bottom:0;box-shadow:none"><div class="hd" style="height:17.5px;line-height:16.5px">Filter Settings</div></div>
<div class="t b" style="font-size:11.3px;left:43.5px;top:552.9px;color:#c9d6f2">View dB:</div>
<div class="t b" style="font-size:11.3px;left:216.5px;top:552.9px;color:#c9d6f2">Freq.:</div>
<div class="abs" style="left:119.7px;top:553px;width:10px;height:10px;border-radius:50%;border:1.8px solid #aeb3c0;background:#0a0c14"></div>
<div class="t b" style="font-size:11.3px;left:135.5px;top:552.9px;color:#c9d6f2">lin.</div>
<div class="abs" style="left:162.5px;top:553px;width:10px;height:10px;border-radius:50%;border:1.8px solid #aeb3c0;background:#0a0c14"></div><div class="abs" style="left:165.0px;top:555.5px;width:5px;height:5px;border-radius:50%;background:#eef1f8"></div>
<div class="t b" style="font-size:11.3px;left:178.5px;top:552.9px;color:#c9d6f2">log.</div>
<div class="abs" style="left:269.1px;top:553px;width:10px;height:10px;border-radius:50%;border:1.8px solid #aeb3c0;background:#0a0c14"></div>
<div class="t b" style="font-size:11.3px;left:285.3px;top:552.9px;color:#c9d6f2">lin.</div>
<div class="abs" style="left:312.2px;top:553px;width:10px;height:10px;border-radius:50%;border:1.8px solid #aeb3c0;background:#0a0c14"></div><div class="abs" style="left:314.7px;top:555.5px;width:5px;height:5px;border-radius:50%;background:#eef1f8"></div>
<div class="t b" style="font-size:11.3px;left:328.4px;top:552.9px;color:#c9d6f2">log.</div>
<div class="abs" style="left:39px;top:577.5px;width:337px;height:180px;background:#000"></div>
<svg class="abs" style="left:0;top:570px" width="400" height="200" viewBox="0 570 400 200" font-family="Liberation Sans, Arial, sans-serif"><rect x="73" y="587.5" width="300" height="151.5" fill="#1b2644"/><clipPath id="cp"><polygon points="73.0,736.4 88.0,731.5 102.7,725.6 109.0,720.0 115.0,713.3 121.0,704.0 127.0,693.8 131.0,688.5 134.5,684.0 138.0,678.0 141.3,671.3 144.0,663.5 146.7,654.7 149.8,647.0 152.8,640.0 156.5,629.6 161.5,620.0 166.3,612.5 170.0,607.5 173.6,604.0 177.0,602.6 181.0,602.0 200.0,602.4 223.0,603.5 236.0,604.5 247.2,605.7 256.0,607.2 263.4,609.0 269.0,610.8 274.0,613.0 280.0,616.7 285.0,621.0 289.0,626.0 293.0,631.8 297.0,638.5 301.0,645.5 303.7,656.0 306.5,663.0 309.0,669.6 311.8,679.0 314.5,688.4 317.3,698.0 320.0,707.0 322.6,717.0 325.2,726.0 328.5,733.0 332.0,738.5 332,739 73,739"/></clipPath><polygon points="73.0,606.6 87.0,611.5 101.5,616.9 110.0,624.0 117.4,632.0 123.5,640.5 128.4,649.0 134.5,659.6 141.3,671.8 146.5,685.0 151.6,698.7 156.5,711.0 161.4,723.0 165.0,730.0 168.7,735.4 173.6,738.3 190.0,738.6 200.0,738.2 215.0,738.8 236.5,738.6 247.0,737.6 258.0,735.5 266.0,732.8 274.0,728.8 281.0,724.0 287.6,718.0 292.0,711.5 295.7,704.5 299.0,695.5 302.4,685.7 305.7,676.5 309.1,667.0 311.8,657.5 314.5,649.0 318.5,636.0 322.5,623.7 325.5,616.0 328.0,610.0 330.0,606.5 332.0,604.4 334.0,603.0 336.0,602.2 350.0,602.0 371.0,602.2 373.0,603.5 373,739 73,739" fill="#0e1d6a"/><polygon points="73.0,736.4 88.0,731.5 102.7,725.6 109.0,720.0 115.0,713.3 121.0,704.0 127.0,693.8 131.0,688.5 134.5,684.0 138.0,678.0 141.3,671.3 144.0,663.5 146.7,654.7 149.8,647.0 152.8,640.0 156.5,629.6 161.5,620.0 166.3,612.5 170.0,607.5 173.6,604.0 177.0,602.6 181.0,602.0 200.0,602.4 223.0,603.5 236.0,604.5 247.2,605.7 256.0,607.2 263.4,609.0 269.0,610.8 274.0,613.0 280.0,616.7 285.0,621.0 289.0,626.0 293.0,631.8 297.0,638.5 301.0,645.5 303.7,656.0 306.5,663.0 309.0,669.6 311.8,679.0 314.5,688.4 317.3,698.0 320.0,707.0 322.6,717.0 325.2,726.0 328.5,733.0 332.0,738.5 332,739 73,739" fill="#5c1426"/><polygon clip-path="url(#cp)" points="73.0,606.6 87.0,611.5 101.5,616.9 110.0,624.0 117.4,632.0 123.5,640.5 128.4,649.0 134.5,659.6 141.3,671.8 146.5,685.0 151.6,698.7 156.5,711.0 161.4,723.0 165.0,730.0 168.7,735.4 173.6,738.3 190.0,738.6 200.0,738.2 215.0,738.8 236.5,738.6 247.0,737.6 258.0,735.5 266.0,732.8 274.0,728.8 281.0,724.0 287.6,718.0 292.0,711.5 295.7,704.5 299.0,695.5 302.4,685.7 305.7,676.5 309.1,667.0 311.8,657.5 314.5,649.0 318.5,636.0 322.5,623.7 325.5,616.0 328.0,610.0 330.0,606.5 332.0,604.4 334.0,603.0 336.0,602.2 350.0,602.0 371.0,602.2 373.0,603.5 373,739 73,739" fill="#2d1661"/><path d="M123.5 587.5V739M173.5 587.5V739M223.5 587.5V739M273.5 587.5V739M323.5 587.5V739M73 613.5H373M73 638.5H373M73 663.5H373M73 688.5H373M73 713.5H373" stroke="#a8b4f0" stroke-opacity="0.36" stroke-width="1" fill="none" shape-rendering="crispEdges"/><path d="M73 739.5H373" stroke="#5a6a8a" stroke-width="1"/><polyline points="73.0,736.4 88.0,731.5 102.7,725.6 109.0,720.0 115.0,713.3 121.0,704.0 127.0,693.8 131.0,688.5 134.5,684.0 138.0,678.0 141.3,671.3 144.0,663.5 146.7,654.7 149.8,647.0 152.8,640.0 156.5,629.6 161.5,620.0 166.3,612.5 170.0,607.5 173.6,604.0 177.0,602.6 181.0,602.0 200.0,602.4 223.0,603.5 236.0,604.5 247.2,605.7 256.0,607.2 263.4,609.0 269.0,610.8 274.0,613.0 280.0,616.7 285.0,621.0 289.0,626.0 293.0,631.8 297.0,638.5 301.0,645.5 303.7,656.0 306.5,663.0 309.0,669.6 311.8,679.0 314.5,688.4 317.3,698.0 320.0,707.0 322.6,717.0 325.2,726.0 328.5,733.0 332.0,738.5" fill="none" stroke="#e0405e" stroke-width="1.1"/><polyline points="73.0,606.6 87.0,611.5 101.5,616.9 110.0,624.0 117.4,632.0 123.5,640.5 128.4,649.0 134.5,659.6 141.3,671.8 146.5,685.0 151.6,698.7 156.5,711.0 161.4,723.0 165.0,730.0 168.7,735.4 173.6,738.3 190.0,738.6 200.0,738.2 215.0,738.8 236.5,738.6 247.0,737.6 258.0,735.5 266.0,732.8 274.0,728.8 281.0,724.0 287.6,718.0 292.0,711.5 295.7,704.5 299.0,695.5 302.4,685.7 305.7,676.5 309.1,667.0 311.8,657.5 314.5,649.0 318.5,636.0 322.5,623.7 325.5,616.0 328.0,610.0 330.0,606.5 332.0,604.4 334.0,603.0 336.0,602.2 350.0,602.0 371.0,602.2 373.0,603.5" fill="none" stroke="#f4f6ff" stroke-width="1.2"/><path d="M141.4 587.5V739" stroke="#f3ea8a" stroke-width="1.3" stroke-dasharray="3.2 2.6" fill="none"/><path d="M309.4 587.5V739" stroke="#f3ea8a" stroke-width="1.3" stroke-dasharray="3.2 2.6" fill="none"/><rect x="73.5" y="745" width="299.5" height="11.5" fill="#242e4a" stroke="#5f6f7e" stroke-width="1"/><text x="79" y="587.6" font-size="11" fill="#c8cad0" text-anchor="middle">0.02</text><text x="123.5" y="587.6" font-size="11" fill="#c8cad0" text-anchor="middle">0.07</text><text x="173.3" y="587.6" font-size="11" fill="#c8cad0" text-anchor="middle">0.22</text><text x="223" y="587.6" font-size="11" fill="#c8cad0" text-anchor="middle">0.69</text><text x="270.8" y="587.6" font-size="11" fill="#c8cad0" text-anchor="middle">2.2</text><text x="320.5" y="587.6" font-size="11" fill="#c8cad0" text-anchor="middle">6.9</text><text x="365.8" y="587.6" font-size="11" fill="#c8cad0" text-anchor="middle">22.</text><text x="71" y="596.1" font-size="11" fill="#c8cad0" text-anchor="end">0.2</text><text x="71" y="619.1" font-size="11" fill="#c8cad0" text-anchor="end">-1.4</text><text x="71" y="645.0" font-size="11" fill="#c8cad0" text-anchor="end">-3.3</text><text x="71" y="670.1" font-size="11" fill="#c8cad0" text-anchor="end">-5.7</text><text x="71" y="695.7" font-size="11" fill="#c8cad0" text-anchor="end">-9.2</text><text x="71" y="720.7" font-size="11" fill="#c8cad0" text-anchor="end">-14</text><text x="71" y="742.0" font-size="11" fill="#c8cad0" text-anchor="end">-40</text></svg>
<div class="t b" style="font-size:11.2px;left:42.8px;top:773.7px;color:#c9d6f2">Split-Freq 1:</div>
<div class="t b" style="font-size:11.2px;right:641.7px;top:773.7px;color:#f6bd4c">0.10</div>
<div class="t b" style="font-size:11.2px;left:183px;top:773.7px;color:#c9d6f2">kHz</div>
<div class="t b" style="font-size:11.2px;left:216.8px;top:773.7px;color:#c9d6f2">Split-Freq 2:</div>
<div class="t b" style="font-size:11.2px;right:467.5px;top:773.7px;color:#f6bd4c">5.08</div>
<div class="t b" style="font-size:11.2px;left:356.8px;top:773.7px;color:#c9d6f2">kHz</div>
<div class="t lbl" style="font-size:11.3px;left:33px;top:810.1px;">Mode:</div>
<div class="chk on lt" style="left:87px;top:809px"></div>
<div class="t lbl" style="font-size:11.2px;left:104px;top:810.2px;"><u>M</u>ulti Band</div>
<div class="chk on lt" style="left:87px;top:833px"></div>
<div class="t lbl" style="font-size:11.2px;left:104px;top:833.9px;"><u>D</u>irection Pan</div>
<div class="t lbl" style="font-size:11.2px;left:197.5px;top:810.2px;">Band Separation:</div>
<div class="combo" style="left:306px;top:806px;width:84.5px;height:17.5px;line-height:16px;font-size:10.5px"><span style="position:absolute;left:3.5px;top:0">High</span><div class="ar"></div></div>
<div class="grp" style="left:395.2px;top:520.6px;width:80.8px;height:279.4px"><div class="hd" style="height:18px;line-height:17px;line-height:18px;">Bass</div></div>
<div class="t lbl" style="font-size:11.5px;left:334.0px;width:200px;text-align:center;top:543.8px;">Stereo:</div>
<div class="knob" style="left:420.0px;top:560px"><i class="" style="transform:rotate(-150deg)"></i></div>
<div class="t sm" style="font-size:9px;left:400.0px;top:589.8px;">Mono</div>
<div class="t sm" style="font-size:9px;left:453.8px;top:589.8px;letter-spacing:.4px">Exp.</div>
<div class="inp" style="left:416.5px;top:606.5px;width:38.5px;height:17.5px;line-height:15px;font-size:11.5px">0.0</div>
<div class="t sm" style="font-size:8px;left:459.0px;top:611.2px;">%</div>
<div class="t lbl" style="font-size:11.5px;left:334.0px;width:200px;text-align:center;top:630.5px;">Pan:</div>
<div class="knob" style="left:420.0px;top:648px"><i class="" style="transform:rotate(-55deg)"></i></div>
<div class="t sm" style="font-size:9px;right:403.0px;top:657.8px;">0</div>
<div class="t sm" style="font-size:9px;left:456.0px;top:657.8px;">-3</div>
<div class="t sm" style="font-size:9px;left:413.5px;top:677.5px;">L</div>
<div class="t sm" style="font-size:9px;left:454.0px;top:678.0px;">R</div>
<div class="t lbl" style="font-size:11.5px;left:334.0px;width:200px;text-align:center;top:689.1px;">Gain:</div>
<div class="knob" style="left:420.0px;top:706.3px"><i class="d" style="transform:rotate(0deg)"></i></div>
<div class="inp" style="left:416.5px;top:743.5px;width:38.5px;height:17.5px;line-height:15px;font-size:11.5px;padding-left:4px">0.0</div>
<div class="t sm" style="font-size:9px;left:457.5px;top:747.3px;letter-spacing:.3px">dB</div>
<div class="btn" style="left:416.0px;top:770.8px;width:39.5px;height:21.4px;line-height:19px">Solo</div>
<div class="grp" style="left:481.0px;top:520.6px;width:80.8px;height:279.4px"><div class="hd" style="height:18px;line-height:17px;line-height:18px;">Mid</div></div>
<div class="t lbl" style="font-size:11.5px;left:419.79999999999995px;width:200px;text-align:center;top:543.8px;">Stereo:</div>
<div class="knob" style="left:505.79999999999995px;top:560px"><i class="" style="transform:rotate(28deg)"></i></div>
<div class="t sm" style="font-size:9px;left:485.8px;top:589.8px;">Mono</div>
<div class="t sm" style="font-size:9px;left:539.6px;top:589.8px;letter-spacing:.4px">Exp.</div>
<div class="inp" style="left:502.3px;top:606.5px;width:38.5px;height:17.5px;line-height:15px;font-size:11.5px">119.0</div>
<div class="t sm" style="font-size:8px;left:544.8px;top:611.2px;">%</div>
<div class="t lbl" style="font-size:11.5px;left:419.79999999999995px;width:200px;text-align:center;top:630.5px;">Pan:</div>
<div class="knob" style="left:505.79999999999995px;top:648px"><i class="" style="transform:rotate(28deg)"></i></div>
<div class="t sm" style="font-size:9px;right:317.2px;top:657.8px;">-2</div>
<div class="t sm" style="font-size:9px;left:541.8px;top:657.8px;">0</div>
<div class="t sm" style="font-size:9px;left:499.3px;top:677.5px;">L</div>
<div class="t sm" style="font-size:9px;left:539.8px;top:678.0px;">R</div>
<div class="t lbl" style="font-size:11.5px;left:419.79999999999995px;width:200px;text-align:center;top:689.1px;">Gain:</div>
<div class="knob" style="left:505.79999999999995px;top:706.3px"><i class="d" style="transform:rotate(0deg)"></i></div>
<div class="inp" style="left:502.3px;top:743.5px;width:38.5px;height:17.5px;line-height:15px;font-size:11.5px;padding-left:4px">0.0</div>
<div class="t sm" style="font-size:9px;left:543.3px;top:747.3px;letter-spacing:.3px">dB</div>
<div class="btn" style="left:501.8px;top:770.8px;width:39.5px;height:21.4px;line-height:19px">Solo</div>
<div class="grp" style="left:566.7px;top:520.6px;width:80.8px;height:279.4px"><div class="hd" style="height:18px;line-height:17px;line-height:18px;">High</div></div>
<div class="t lbl" style="font-size:11.5px;left:505.5px;width:200px;text-align:center;top:543.8px;">Stereo:</div>
<div class="knob" style="left:591.5px;top:560px"><i class="" style="transform:rotate(-35deg)"></i></div>
<div class="t sm" style="font-size:9px;left:571.5px;top:589.8px;">Mono</div>
<div class="t sm" style="font-size:9px;left:625.3px;top:589.8px;letter-spacing:.4px">Exp.</div>
<div class="inp" style="left:588px;top:606.5px;width:38.5px;height:17.5px;line-height:15px;font-size:11.5px">77.0</div>
<div class="t sm" style="font-size:8px;left:630.5px;top:611.2px;">%</div>
<div class="t lbl" style="font-size:11.5px;left:505.5px;width:200px;text-align:center;top:630.5px;">Pan:</div>
<div class="knob" style="left:591.5px;top:648px"><i class="" style="transform:rotate(0deg)"></i></div>
<div class="t sm" style="font-size:9px;right:231.5px;top:657.8px;">0</div>
<div class="t sm" style="font-size:9px;left:627.5px;top:657.8px;">0</div>
<div class="t sm" style="font-size:9px;left:585px;top:677.5px;">L</div>
<div class="t sm" style="font-size:9px;left:625.5px;top:678.0px;">R</div>
<div class="t lbl" style="font-size:11.5px;left:505.5px;width:200px;text-align:center;top:689.1px;">Gain:</div>
<div class="knob" style="left:591.5px;top:706.3px"><i class="d" style="transform:rotate(0deg)"></i></div>
<div class="inp" style="left:588px;top:743.5px;width:38.5px;height:17.5px;line-height:15px;font-size:11.5px;padding-left:4px">0.0</div>
<div class="t sm" style="font-size:9px;left:629px;top:747.3px;letter-spacing:.3px">dB</div>
<div class="btn" style="left:587.5px;top:770.8px;width:39.5px;height:21.4px;line-height:19px">Solo</div>
<div class="grp" style="left:652.5px;top:520.6px;width:57.4px;height:279.4px"><div class="hd" style="height:18px;line-height:17px;letter-spacing:.35px;line-height:18px;">Maximize</div></div>
<div class="trk" style="left:680px;top:548px;height:177px"></div>
<div class="thumb" style="left:675px;top:636.3px;width:13.2px;height:29px"><i style="top:6.6px;height:1.2px;background:#7c8292"></i><i style="top:9.3px;height:1.3px;background:#6a7080"></i><i style="top:12.2px;height:1.0px;background:#eea0a8"></i><i style="top:13.1px;height:1.9px;background:#dc3844"></i><i style="top:15.3px;height:1.1px;background:#ee9aa2"></i><i style="top:17.9px;height:1.3px;background:#6a7080"></i><i style="top:21.0px;height:1.3px;background:#7c8292"></i></div>
<div class="inp" style="left:662px;top:743.5px;width:38px;padding-left:3px;height:16.5px;line-height:14px;font-size:11.5px">41.0</div>
<div class="t sm" style="font-size:9px;left:661.5px;top:774.9px;letter-spacing:.15px">0 ... 100</div>
<div class="grp" style="left:715.3px;top:520.6px;width:54.6px;height:279.4px"><div class="hd" style="height:18px;line-height:17px;padding-right:3px;line-height:18px;">In&nbsp;&nbsp;&nbsp;Out</div></div>
<div class="abs" style="left:724px;top:547.3px;width:9px;height:197.70000000000005px;background:#5e6675;border:1px solid #22262e"></div>
<div class="abs" style="left:725px;top:591.8px;width:7px;height:3.6000000000000227px;background:#8cc2f2"></div>
<div class="abs" style="left:725px;top:695.8px;width:7px;height:48.200000000000045px;background:#a2d2fb"></div>
<div class="abs" style="left:753px;top:547.3px;width:9px;height:197.70000000000005px;background:#5e6675;border:1px solid #22262e"></div>
<div class="abs" style="left:754px;top:583.9px;width:7px;height:3.6000000000000227px;background:#8cc2f2"></div>
<div class="abs" style="left:754px;top:688px;width:7px;height:56px;background:#a2d2fb"></div>
<div class="t " style="font-size:9px;left:642.7px;width:200px;text-align:center;top:546.6px;color:#000;-webkit-text-stroke:.08px #000">clip</div>
<div class="t " style="font-size:9px;left:642.7px;width:200px;text-align:center;top:562.4px;color:#000;-webkit-text-stroke:.08px #000">0</div>
<div class="t " style="font-size:9px;left:642.7px;width:200px;text-align:center;top:581.3px;color:#000;-webkit-text-stroke:.08px #000">-3</div>
<div class="t " style="font-size:9px;left:642.7px;width:200px;text-align:center;top:602.4px;color:#000;-webkit-text-stroke:.08px #000">-6</div>
<div class="t " style="font-size:9px;left:642.7px;width:200px;text-align:center;top:623.3px;color:#000;-webkit-text-stroke:.08px #000">-10</div>
<div class="t " style="font-size:9px;left:642.7px;width:200px;text-align:center;top:642.0px;color:#000;-webkit-text-stroke:.08px #000">-20</div>
<div class="t " style="font-size:9px;left:642.7px;width:200px;text-align:center;top:660.8px;color:#000;-webkit-text-stroke:.08px #000">-30</div>
<div class="t " style="font-size:9px;left:642.7px;width:200px;text-align:center;top:680.4px;color:#000;-webkit-text-stroke:.08px #000">-40</div>
<div class="t " style="font-size:9px;left:642.7px;width:200px;text-align:center;top:700.9px;color:#000;-webkit-text-stroke:.08px #000">-50</div>
<div class="t " style="font-size:9px;left:642.7px;width:200px;text-align:center;top:720.1px;color:#000;-webkit-text-stroke:.08px #000">-60</div>
<div class="t sm" style="font-size:9px;left:640.5px;width:200px;text-align:center;top:746.5px;letter-spacing:.8px">dB</div>
<div class="btn" style="left:722.3px;top:772px;width:39px;height:18.5px;line-height:16px">Reset</div>
<div class="chk" style="left:702px;top:838px"></div>
<div class="t lbl" style="font-size:11.5px;left:718.8px;top:839.2px;"><u>B</u>ypass</div>
</body></html>
